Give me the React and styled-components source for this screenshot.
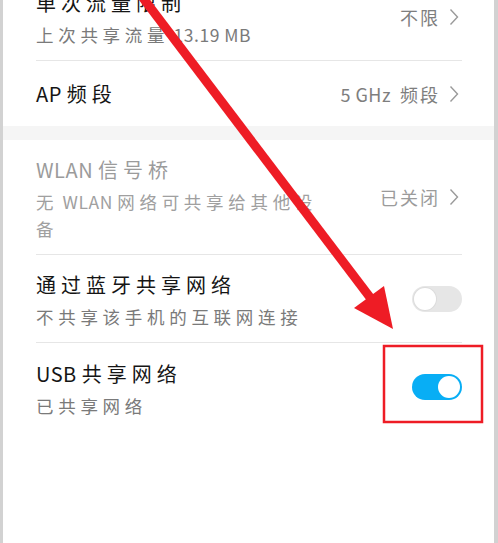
import React from 'react';
import styled, { createGlobalStyle } from 'styled-components';

const GlobalStyle = createGlobalStyle`
    html, body {
        margin: 0;
        padding: 0;
        background: #fff;
    }
    * { box-sizing: border-box; }
`;

const Screen = styled.div`
    position: relative;
    width: 498px;
    height: 543px;
    overflow: hidden;
    background: #fff;
    border-left: 3px solid #d2d2d2;
    border-right: 4px solid #d2d2d2;
    font-family: "Noto Sans CJK SC", "Noto Sans", sans-serif;
`;

const List = styled.div`
    display: flex;
    flex-direction: column;
    margin-top: -27px;
`;

const Group = styled.div`
    display: flex;
    flex-direction: column;
    padding: 0 32px 0 33px;
    background: #fff;
`;

const Band = styled.div`
    height: 14px;
    background: #f5f5f5;
`;

const Row = styled.div`
    display: flex;
    align-items: center;
    justify-content: space-between;
    min-height: ${(props) => props.minHeight || 88}px;
    padding: 12px 0;
    border-bottom: ${(props) => (props.last ? 'none' : '1px solid #e6e6e6')};
`;

const Texts = styled.div`
    display: flex;
    flex-direction: column;
    max-width: ${(props) => props.maxWidth || 340}px;
`;

const Title = styled.div`
    font-size: 20px;
    line-height: 36px;
    letter-spacing: 5px;
    color: ${(props) => (props.disabled ? '#9b9b9b' : '#151515')};
`;

const Subtitle = styled.div`
    font-size: 17.5px;
    line-height: 27px;
    letter-spacing: 4.7px;
    color: ${(props) => (props.disabled ? '#a0a0a0' : '#7a7a7a')};
`;

const Latin = styled.span`
    letter-spacing: 0.5px;
`;

const Value = styled.div`
    display: flex;
    align-items: center;
    gap: 9px;
    margin-right: 3px;
    font-size: 18px;
    letter-spacing: 2px;
    color: ${(props) => (props.disabled ? '#9b9b9b' : '#7e7e7e')};
    white-space: nowrap;
`;

const Track = styled.div`
    position: relative;
    flex-shrink: 0;
    width: 50px;
    height: 26px;
    border-radius: 13px;
    background: ${(props) => (props.on ? '#08aef5' : '#e6e6e6')};
`;

const Knob = styled.div`
    position: absolute;
    top: 2px;
    left: ${(props) => (props.on ? '26px' : '2px')};
    width: 22px;
    height: 22px;
    border-radius: 50%;
    background: #fff;
    box-shadow: 0 0 0 1px ${(props) => (props.on ? '#08aef5' : '#dcdcdc')};
`;

const Overlay = styled.svg`
    position: absolute;
    left: -3px;
    top: 0;
    pointer-events: none;
`;

const Chevron = () => (
    <svg width="10" height="18" viewBox="0 0 10 18">
        <path d="M1.5 1.5 L8.5 9 L1.5 16.5" fill="none" stroke="#9a9a9a" strokeWidth="1.4" />
    </svg>
);

const Switch = ({ on }) => (
    <Track on={on ? 1 : 0}>
        <Knob on={on ? 1 : 0} />
    </Track>
);

function App() {
    return (
        <>
            <GlobalStyle />
            <Screen>
                <List>
                    <Group>
                        <Row>
                            <Texts>
                                <Title>单次流量限制</Title>
                                <Subtitle>上次共享流量<Latin> 13.19 MB</Latin></Subtitle>
                            </Texts>
                            <Value>不限 <Chevron /></Value>
                        </Row>
                        <Row minHeight={65} last>
                            <Title><Latin>AP </Latin>频段</Title>
                            <Value><Latin>5 GHz </Latin>频段 <Chevron /></Value>
                        </Row>
                    </Group>
                    <Band />
                    <Group>
                        <Row minHeight={113}>
                            <Texts maxWidth={282}>
                                <Title disabled><Latin>WLAN </Latin>信号桥</Title>
                                <Subtitle disabled>无<Latin> WLAN </Latin>网络可共享给其他设备</Subtitle>
                            </Texts>
                            <Value disabled>已关闭 <Chevron /></Value>
                        </Row>
                        <Row>
                            <Texts>
                                <Title>通过蓝牙共享网络</Title>
                                <Subtitle>不共享该手机的互联网连接</Subtitle>
                            </Texts>
                            <Switch />
                        </Row>
                        <Row last>
                            <Texts>
                                <Title><Latin>USB </Latin>共享网络</Title>
                                <Subtitle>已共享网络</Subtitle>
                            </Texts>
                            <Switch on />
                        </Row>
                    </Group>
                </List>
                <Overlay width="498" height="543" viewBox="0 0 498 543">
                    <line x1="137" y1="-10" x2="372" y2="300" stroke="#ee1c25" strokeWidth="9" />
                    <polygon points="393,329 354,308 384,286" fill="#ee1c25" />
                    <rect x="384" y="346" width="98" height="76" fill="none" stroke="#ee1c25" strokeWidth="2.5" />
                </Overlay>
            </Screen>
        </>
    );
}

export default App;
